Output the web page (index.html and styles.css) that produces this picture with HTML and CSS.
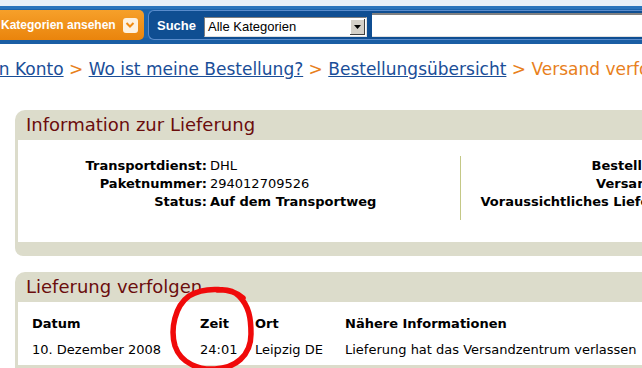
FILE: index.html
```html
<!DOCTYPE html>
<html>
<head>
  <title>Versand verfolgen</title>
  <link rel="stylesheet" href="styles.css">
</head>
<body>

<!-- Header strip and navigation -->
<div class="top-strip"></div>
<div class="navbar">
  <div class="cat-btn">
    Kategorien ansehen
    <span class="cat-arrow">
      <svg width="10" height="8" viewBox="0 0 10 8"><path d="M1.5 2 L5 5.5 L8.5 2" fill="none" stroke="#f08a10" stroke-width="2"/></svg>
    </span>
  </div>
  <div class="search">
    <span class="search-label">Suche</span>
    <div class="select">
      <span class="select-text">Alle Kategorien</span>
      <span class="select-btn">
        <svg width="7" height="4" viewBox="0 0 7 4"><path d="M0 0 H7 L3.5 4 Z" fill="#000"/></svg>
      </span>
    </div>
    <div class="search-input"></div>
  </div>
</div>

<!-- Breadcrumb -->
<div class="breadcrumb">
  <a href="#">Mein Konto</a> <span class="sep">&gt;</span>
  <a href="#">Wo ist meine Bestellung?</a> <span class="sep">&gt;</span>
  <a href="#">Bestellungsübersicht</a> <span class="sep">&gt;</span>
  <span class="current">Versand verfolgen</span>
</div>

<!-- Delivery info -->
<div class="box">
  <div class="box-head">Information zur Lieferung</div>
  <div class="box-body info">
    <div class="info-left">
      <span class="lbl">Transportdienst:</span><span class="val">DHL</span>
      <span class="lbl">Paketnummer:</span><span class="val">294012709526</span>
      <span class="lbl">Status:</span><span class="val strong">Auf dem Transportweg</span>
    </div>
    <div class="info-sep"></div>
    <div class="info-right">
      <span class="lbl">Bestellnummer:</span><span class="val">302-1234567-1234567</span>
      <span class="lbl">Versanddatum:</span><span class="val">9. Dezember 2008</span>
      <span class="lbl"></span><span class="val"></span>
      <span class="lbl">Voraussichtliches Lieferdatum:</span><span class="val">11. Dezember 2008</span>
    </div>
  </div>
  <div class="box-foot"></div>
</div>

<!-- Tracking -->
<div class="box">
  <div class="box-head">Lieferung verfolgen</div>
  <div class="box-body track">
    <span class="th">Datum</span><span class="th">Zeit</span><span class="th">Ort</span><span class="th">Nähere Informationen</span>
    <span>10. Dezember 2008</span><span>24:01</span><span>Leipzig DE</span><span>Lieferung hat das Versandzentrum verlassen</span>
  </div>
  <div class="box-foot"></div>
</div>

<!-- Hand drawn marker -->
<svg class="marker" width="100" height="90" viewBox="0 0 100 90">
  <path d="M78 14 C68 4, 40 2, 24 12 C10 22, 5 45, 10 62 C16 80, 35 86, 50 85 C70 84, 86 72, 86 50 C86 34, 84 22, 74 12 C68 6, 60 5, 52 6"
        fill="none" stroke="#f00a0a" stroke-width="5.5" stroke-linecap="round"/>
</svg>

</body>
</html>
```

FILE: styles.css
```css
html, body {
  margin: 0;
  overflow: hidden;
}
body {
  font-family: "DejaVu Sans", Verdana, sans-serif;
  font-size: 13px;
  color: #000;
  background: white;
  width: 642px;
  height: 368px;
  position: relative;
}

/* top strip + nav */
.top-strip {
  height: 6px;
  background: #e8f0f8;
}
.navbar {
  height: 38px;
  background: #1c64ac;
  display: flex;
  align-items: center;
  gap: 4px;
  box-shadow: inset 0 3px 0 #2a74bc, inset 0 -6px 0 #1a5ea4;
}
.cat-btn {
  width: 144px;
  height: 30px;
  flex-shrink: 0;
  box-sizing: border-box;
  padding-left: 1px;
  background: linear-gradient(#f6a02a, #ea840c);
  border-radius: 0 5px 5px 0;
  color: white;
  font-family: "Liberation Sans", Arial, sans-serif;
  font-weight: bold;
  font-size: 12px;
  display: flex;
  align-items: center;
  gap: 7px;
  white-space: nowrap;
}
.cat-arrow {
  width: 15px;
  height: 15px;
  background: #fdf1e0;
  border-radius: 3px;
  display: flex;
  align-items: center;
  justify-content: center;
}
.search {
  flex: 1;
  height: 30px;
  box-sizing: border-box;
  background: #0f4e92;
  border: 1px solid #5a8ccc;
  border-right: none;
  border-radius: 6px 0 0 6px;
  display: flex;
  align-items: center;
  padding-left: 8px;
  padding-top: 3px;
}
.search-label {
  color: white;
  font-family: "Liberation Sans", Arial, sans-serif;
  font-weight: bold;
  font-size: 13px;
  width: 47px;
  margin-top: -3px;
}
.select {
  width: 163px;
  height: 20px;
  box-sizing: border-box;
  background: white;
  border: 1px solid #7f7f7f;
  border-right-color: #e0e0e0;
  border-bottom-color: #e0e0e0;
  display: flex;
  align-items: center;
  font-family: "Liberation Sans", Arial, sans-serif;
  font-size: 13px;
}
.select-text {
  flex: 1;
  padding-left: 3px;
}
.select-btn {
  width: 15px;
  height: 16px;
  margin-right: 1px;
  background: #d4d0c8;
  box-shadow: inset -1px -1px 0 #404040, inset 1px 1px 0 #fff;
  display: flex;
  align-items: center;
  justify-content: center;
}
.search-input {
  flex: 1;
  height: 21px;
  margin-left: 5px;
  margin-top: -3px;
  background: white;
  border-top: 2px solid #808080;
  border-bottom: 1px solid #e0e0e0;
}

/* breadcrumb */
.breadcrumb {
  margin-left: -31px;
  padding-top: 13px;
  height: 53px;
  font-size: 17px;
  line-height: 24px;
  white-space: nowrap;
}
.breadcrumb a {
  color: #1a4e98;
}
.breadcrumb .sep,
.breadcrumb .current {
  color: #e8801c;
}

/* boxes */
.box {
  margin-left: 15px;
  width: 800px;
  margin-bottom: 16px;
}
.box-head {
  height: 30px;
  line-height: 30px;
  background: #dcdccb;
  border-radius: 10px 0 0 0;
  padding-left: 11px;
  font-size: 18px;
  color: #6b0d0d;
}
.box-body {
  border-left: 3px solid #dcdccb;
  background: white;
}
.box-foot {
  height: 14px;
  background: #dcdccb;
  border-radius: 0 0 0 8px;
}

/* info section */
.info {
  height: 102px;
  box-sizing: border-box;
  padding-top: 17px;
  display: flex;
  align-items: flex-start;
  overflow: hidden;
}
.info-left,
.info-right {
  display: grid;
  flex-shrink: 0;
  column-gap: 3px;
  line-height: 18px;
  white-space: nowrap;
}
.info-left {
  grid-template-columns: 189px 250px;
}
.info-right {
  grid-template-columns: 247px auto;
}
.lbl {
  font-weight: bold;
  text-align: right;
}
.val.strong {
  font-weight: bold;
}
.info-sep {
  flex-shrink: 0;
  width: 1px;
  height: 64px;
  margin-top: -1px;
  background: #c4c886;
}

/* tracking table */
.track {
  height: 63px;
  box-sizing: border-box;
  padding: 12px 0 0 14px;
  display: grid;
  grid-template-columns: 168px 55px 90px auto;
  line-height: 20px;
  white-space: nowrap;
}
.th {
  font-weight: bold;
}

/* red marker drawn on top */
.marker {
  position: absolute;
  left: 165px;
  top: 284px;
}
```
